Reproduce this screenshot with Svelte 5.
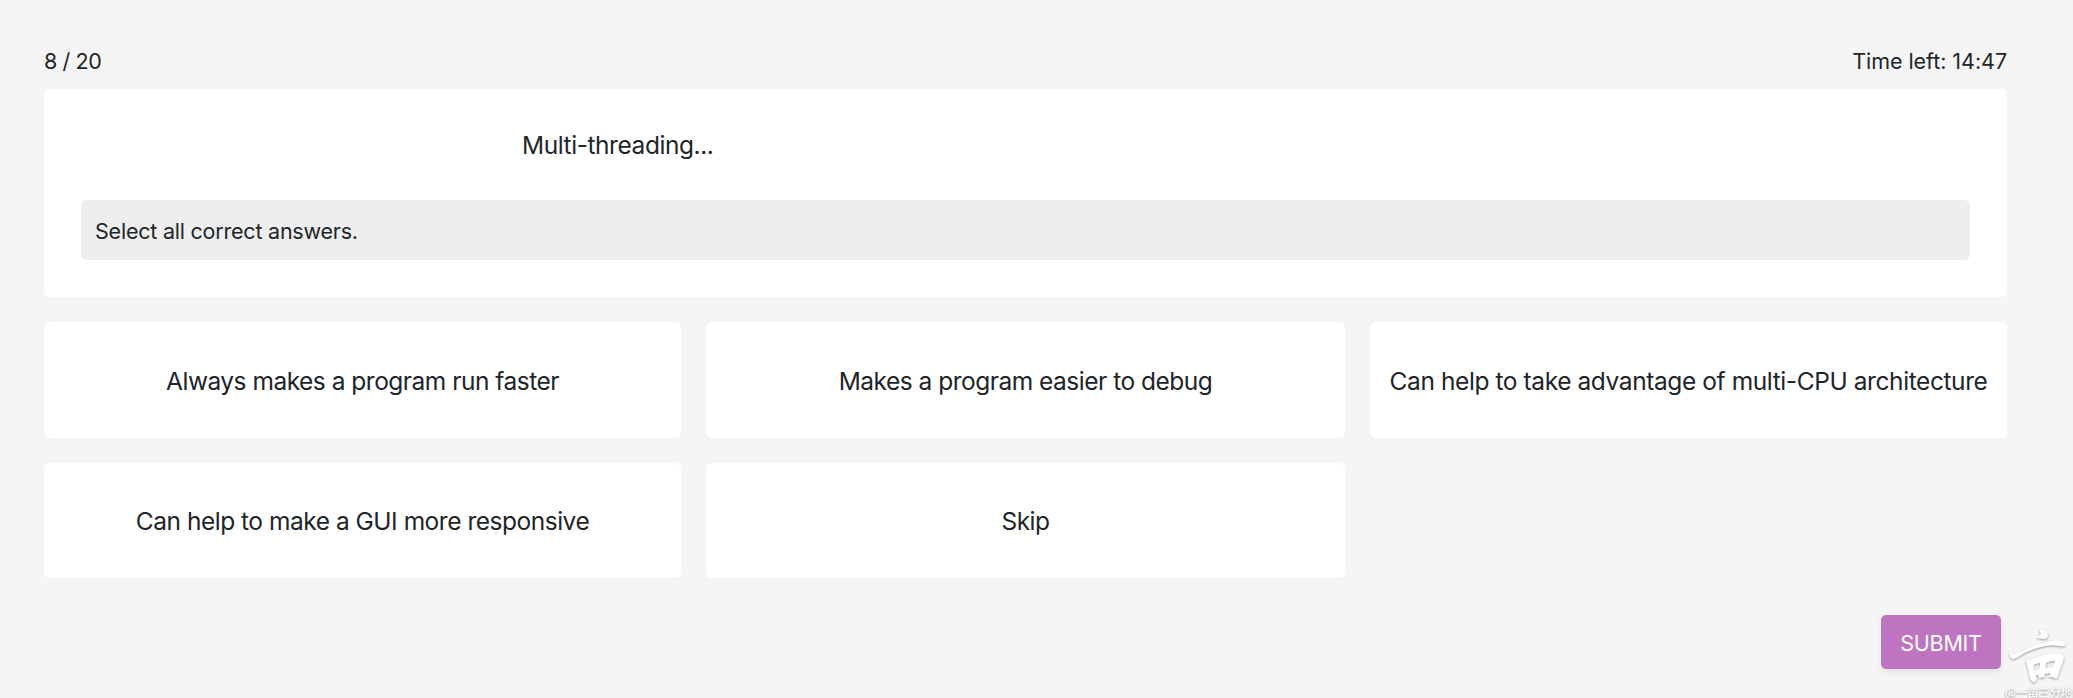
<script>
  const options = [
    { text: 'Always makes a program run faster', tone: 'normal' },
    { text: 'Makes a program easier to debug', tone: 'normal' },
    { text: 'Can help to take advantage of multi-CPU architecture', tone: 'long' },
    { text: 'Can help to make a GUI more responsive', tone: 'lower' },
    { text: 'Skip', tone: 'lower' }
  ];
</script>

<main class="quiz">
  <header class="status">
    <span class="count">8 / 20</span>
    <span class="time">Time left: 14:47</span>
  </header>
  <section class="question">
    <div class="prompt"><span>Multi-threading...</span></div>
    <div class="hint"><span>Select all correct answers.</span></div>
  </section>
  <section class="options">
    {#each options as option}
      <button class="option {option.tone}"><span>{option.text}</span></button>
    {/each}
  </section>
  <footer class="actions">
    <button class="submit"><span>SUBMIT</span></button>
  </footer>
  <div class="mark">
    <svg width="73" height="60" viewBox="0 0 219 180" fill="#fff">
      <path d="M117 14c10-5 27 6 28 17 0 8-9 13-17 11-7-2-13-4-20-3 8-3 13-7 14-14 0-4-3-7-5-11z" />
      <path d="M30 80c-3 10 0 23 10 22 9-1 15-7 24-12 25-15 56-26 92-29 13-1 26 4 36 3 6-1 5-8-2-13-8-6-20-6-32-4-40 6-72 20-97 33-12 7-23 7-31 0z" />
      <path fill-rule="evenodd" d="M78 105c2-4 7-3 11 0 17-9 58-23 86-20 13 2 19 8 16 18-5 18-13 34-17 51-2 8-9 9-14 3-18-3-39 0-51 4 0 8-4 14-11 10-8-5-10-20-13-35-2-12-8-24-7-31zm23 15c0 8 2 12 4 17l12-4 4-18c-8 0-14 2-20 5zm39-8-4 17 21-3c4-7 6-12 8-17 0-5-15 0-25 3zm-25 38-8 3 3 7 6-2zm20-4-2 9 15-1 3-9z" />
    </svg>
    <span>@一亩三分地</span>
  </div>
</main>

<style>
  :global(body) { background: #f5f5f5; overflow: hidden; }
  .quiz {
    position: relative;
    box-sizing: border-box;
    height: 698px;
    padding: 45px 66px 0 44px;
    font-family: Inter, "Liberation Sans", sans-serif;
    color: #212529;
  }
  .status { display: flex; justify-content: space-between; height: 44px; font-size: 21.5px; line-height: 32px; }
  .count { letter-spacing: -0.4px; }
  .time { letter-spacing: -0.05px; }
  .question { box-sizing: border-box; height: 208px; padding: 37px; border-radius: 6px; background: #fff; }
  .prompt { height: 74px; padding-left: 441px; font-size: 24.5px; line-height: 38px; letter-spacing: -0.44px; }
  .hint { height: 60px; padding-left: 14px; border-radius: 6px; background: #eee; font-size: 21.5px; line-height: 62px; letter-spacing: -0.22px; }
  .options { display: grid; grid-template-columns: 637px 639px 637px; gap: 25px; margin-top: 25px; }
  button { border: 0; padding: 0; font-family: inherit; }
  .option {
    height: 115.7px;
    padding-top: 2px;
    border-radius: 6px;
    background: #fff;
    color: inherit;
    font-size: 24.5px;
    letter-spacing: -0.5px;
    white-space: nowrap;
  }
  .option.long { letter-spacing: -0.41px; }
  .option.lower { padding-top: 0; letter-spacing: -0.48px; }
  .actions { display: flex; justify-content: flex-end; padding: 36.6px 6px 0 0; }
  .submit {
    width: 120px;
    height: 54px;
    padding-top: 2px;
    border-radius: 5px;
    background: #bf74c2;
    color: #fff;
    font-size: 21.5px;
    letter-spacing: -0.25px;
    box-shadow: 0 3px 6px rgb(0 0 0 / 8%);
  }
  .mark { position: absolute; left: 2000px; top: 625px; width: 73px; height: 73px; filter: drop-shadow(0 1px 1px rgb(0 0 0 / 38%)); }
  .mark svg { display: block; }
  .mark span { display: block; padding-left: 5px; color: #f8f8f8; font: bold 11.2px/14px "Noto Sans CJK SC", sans-serif; white-space: nowrap; }
</style>
